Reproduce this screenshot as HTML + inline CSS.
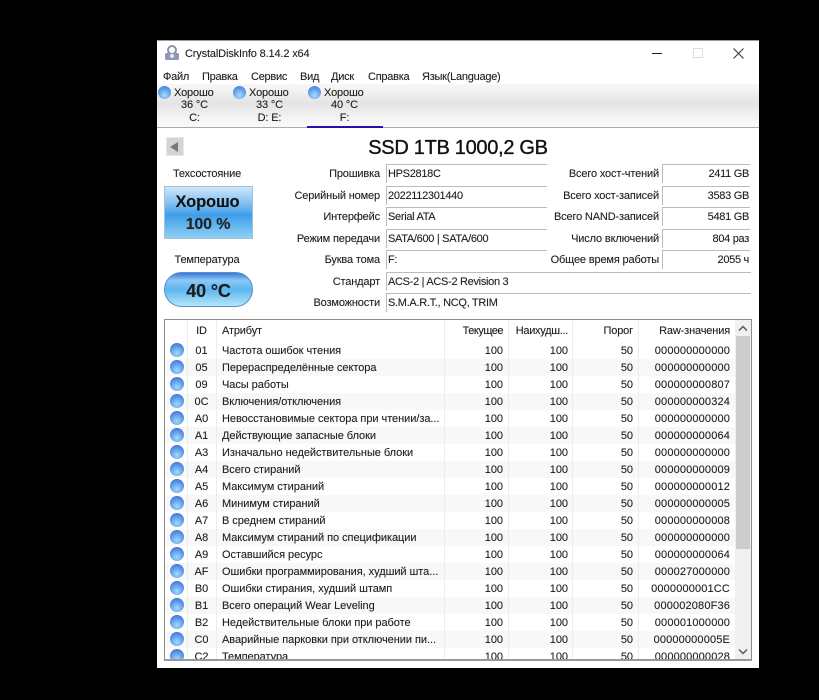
<!DOCTYPE html>
<html><head><meta charset="utf-8"><style>
html,body{margin:0;padding:0;background:#000;width:819px;height:700px;overflow:hidden}
body{position:relative;font-family:"Liberation Sans","DejaVu Sans",sans-serif;font-size:11px;color:#1c1c1c;letter-spacing:-.15px;text-shadow:0 0 .6px rgba(0,0,0,.35)}
div{position:absolute;white-space:nowrap;box-sizing:border-box}
#w{left:157px;top:40px;width:602px;height:628px;background:#fff;border-top:1px solid #9a9a9a}
.m{top:70px;height:14px;line-height:14px;letter-spacing:-.25px}
.t{width:75px;text-align:center;line-height:13px}
.l{right:439px;text-align:right;height:18px;line-height:18px}
.v{left:386px;height:19px;line-height:18px;padding-left:1px;border-top:1px solid #bbb;border-left:1px solid #bbb;width:161px;letter-spacing:-.3px}
.lr{right:160px;text-align:right;height:18px;line-height:18px}
.vr{left:662px;width:88px;height:19px;line-height:18px;padding-right:1px;text-align:right;border-top:1px solid #bbb;border-left:1px solid #bbb;letter-spacing:-.3px}
.h{top:324px;height:14px;line-height:14px}
.r{left:165px;width:570px;height:17px;line-height:17px;overflow:hidden;letter-spacing:-.05px}
.r.o{background:#f8f8f8}
.r b{position:absolute;font-weight:normal;top:1px}
.i{left:5px;top:1px;width:14px;height:14px;position:absolute;border-radius:50%;background:radial-gradient(circle at 50% 72%,#a4daf9 0,#5a98ea 55%,#3a5cc8 100%)}
.a{left:22px;width:29px;text-align:center}
.n{left:57px;width:226px;overflow:hidden}
.c{right:232px}.d{right:167px}.e{right:102px}.f{right:5px;letter-spacing:.15px}
.s{width:13px;height:13px;border-radius:50%;top:86px;background:radial-gradient(circle at 50% 72%,#a8dcfa 0,#5a9aea 60%,#4a76c8 100%)}
.cl{width:1px;background:#ececf2}
</style></head><body>
<div id="w"></div>
<svg style="position:absolute;left:163px;top:45px" width="18" height="17" viewBox="0 0 18 17"><ellipse cx="9" cy="5" rx="4" ry="4" fill="none" stroke="#8a93ad" stroke-width="2"/><rect x="2" y="8" width="14" height="7" rx="1.5" fill="#8f97b5"/><circle cx="9" cy="11" r="2" fill="#e4e8f2"/></svg>
<div style="left:185px;top:47px;height:14px;line-height:14px">CrystalDiskInfo 8.14.2 x64</div>
<div style="left:652px;top:53px;width:10px;height:1px;background:#222"></div>
<div style="left:693px;top:48px;width:10px;height:10px;border:1px solid #ddd"></div>
<svg style="position:absolute;left:733px;top:48px" width="11" height="11"><path d="M.5.5l10 10M10.5.5l-10 10" stroke="#333" fill="none"/></svg>
<div class="m" style="left:163px">Файл</div><div class="m" style="left:202px">Правка</div><div class="m" style="left:251px">Сервис</div><div class="m" style="left:300px">Вид</div><div class="m" style="left:331px">Диск</div><div class="m" style="left:368px">Справка</div><div class="m" style="left:422px">Язык(Language)</div>
<div style="left:157px;top:84px;width:602px;height:44px;background:linear-gradient(#f8f8f8 0,#f2f2f2 15%,#e4e4e4 45%,#f4f4f4 80%,#fafafa 100%);border-bottom:1px solid #aaa"></div>
<div class="s" style="left:158px"></div><div class="s" style="left:233px"></div><div class="s" style="left:308px"></div>
<div style="left:174px;top:87px;line-height:13px">Хорошо</div><div style="left:249px;top:87px;line-height:13px">Хорошо</div><div style="left:324px;top:87px;line-height:13px">Хорошо</div>
<div class="t" style="left:157px;top:99px">36 °C</div><div class="t" style="left:232px;top:99px">33 °C</div><div class="t" style="left:307px;top:99px">40 °C</div>
<div class="t" style="left:157px;top:112px">C:</div><div class="t" style="left:232px;top:112px">D: E:</div><div class="t" style="left:307px;top:112px">F:</div>
<div style="left:307px;top:126px;width:76px;height:2px;background:#2a10a8"></div>
<div style="left:166px;top:137px;width:18px;height:19px;background:#d4d4d4;border:1px solid #e8e8e8"></div>
<div style="left:170px;top:142px;width:0;height:0;border:5px solid transparent;border-left:0;border-right:8px solid #777"></div>
<div style="left:157px;top:134px;width:602px;text-align:center;font-size:20px;line-height:28px;color:#111;letter-spacing:-.3px;-webkit-text-stroke:.3px #111">SSD 1TB 1000,2 GB</div>
<div style="left:164px;top:167px;width:86px;text-align:center;height:14px;line-height:14px">Техсостояние</div>
<div style="left:164px;top:186px;width:89px;height:53px;border:1px solid #9fc3d8;background:linear-gradient(#cfe6fa 0,#7cbcf0 35%,#3f9ee8 55%,#8fd0f6 100%)"></div>
<div style="left:164px;top:192px;width:87px;text-align:center;font-weight:bold;font-size:16.5px;line-height:20px;color:#111">Хорошо</div>
<div style="left:164px;top:215px;width:88px;text-align:center;font-weight:bold;font-size:16px;line-height:20px;color:#222">100 %</div>
<div style="left:164px;top:253px;width:86px;text-align:center;height:14px;line-height:14px">Температура</div>
<div style="left:164px;top:272px;width:89px;height:35px;border-radius:18px;border:1px solid #5a8ec8;background:linear-gradient(#3a78d8 0,#8cc8f4 22%,#5cb6f0 50%,#b4e6fa 100%)"></div>
<div style="left:164px;top:280px;width:89px;text-align:center;font-weight:bold;font-size:18px;line-height:22px;color:#1a1a1a">40 °C</div>
<div class="l" style="top:165px">Прошивка</div><div class="v" style="top:164px;">HPS2818C</div>
<div class="l" style="top:187px">Серийный номер</div><div class="v" style="top:186px;">2022112301440</div>
<div class="l" style="top:208px">Интерфейс</div><div class="v" style="top:207px;">Serial ATA</div>
<div class="l" style="top:230px">Режим передачи</div><div class="v" style="top:229px;">SATA/600 | SATA/600</div>
<div class="l" style="top:251px">Буква тома</div><div class="v" style="top:250px;">F:</div>
<div class="l" style="top:273px">Стандарт</div><div class="v" style="top:272px;width:365px">ACS-2 | ACS-2 Revision 3</div>
<div class="l" style="top:294px">Возможности</div><div class="v" style="top:293px;width:365px">S.M.A.R.T., NCQ, TRIM</div>
<div class="lr" style="top:165px">Всего хост-чтений</div><div class="vr" style="top:164px">2411 GB</div>
<div class="lr" style="top:187px">Всего хост-записей</div><div class="vr" style="top:186px">3583 GB</div>
<div class="lr" style="top:208px">Всего NAND-записей</div><div class="vr" style="top:207px">5481 GB</div>
<div class="lr" style="top:230px">Число включений</div><div class="vr" style="top:229px">804 раз</div>
<div class="lr" style="top:251px">Общее время работы</div><div class="vr" style="top:250px">2055 ч</div>
<div style="left:164px;top:319px;width:588px;height:342px;border:1px solid #8c8c8c;border-bottom:2px solid #999;overflow:hidden"></div>
<div class="h" style="left:187px;width:29px;text-align:center">ID</div><div class="h" style="left:222px">Атрибут</div><div class="h" style="right:316px;letter-spacing:-.5px">Текущее</div><div class="h" style="right:251px;letter-spacing:-.3px">Наихудш...</div><div class="h" style="right:186px">Порог</div><div class="h" style="right:89px">Raw-значения</div>
<div class="r" style="top:342px"><i class="i"></i><b class="a">01</b><b class="n">Частота ошибок чтения</b><b class="c">100</b><b class="d">100</b><b class="e">50</b><b class="f">000000000000</b></div>
<div class="r o" style="top:359px"><i class="i"></i><b class="a">05</b><b class="n">Перераспределённые сектора</b><b class="c">100</b><b class="d">100</b><b class="e">50</b><b class="f">000000000000</b></div>
<div class="r" style="top:376px"><i class="i"></i><b class="a">09</b><b class="n">Часы работы</b><b class="c">100</b><b class="d">100</b><b class="e">50</b><b class="f">000000000807</b></div>
<div class="r o" style="top:393px"><i class="i"></i><b class="a">0C</b><b class="n">Включения/отключения</b><b class="c">100</b><b class="d">100</b><b class="e">50</b><b class="f">000000000324</b></div>
<div class="r" style="top:410px"><i class="i"></i><b class="a">A0</b><b class="n">Невосстановимые сектора при чтении/за...</b><b class="c">100</b><b class="d">100</b><b class="e">50</b><b class="f">000000000000</b></div>
<div class="r o" style="top:427px"><i class="i"></i><b class="a">A1</b><b class="n">Действующие запасные блоки</b><b class="c">100</b><b class="d">100</b><b class="e">50</b><b class="f">000000000064</b></div>
<div class="r" style="top:444px"><i class="i"></i><b class="a">A3</b><b class="n">Изначально недействительные блоки</b><b class="c">100</b><b class="d">100</b><b class="e">50</b><b class="f">000000000000</b></div>
<div class="r o" style="top:461px"><i class="i"></i><b class="a">A4</b><b class="n">Всего стираний</b><b class="c">100</b><b class="d">100</b><b class="e">50</b><b class="f">000000000009</b></div>
<div class="r" style="top:478px"><i class="i"></i><b class="a">A5</b><b class="n">Максимум стираний</b><b class="c">100</b><b class="d">100</b><b class="e">50</b><b class="f">000000000012</b></div>
<div class="r o" style="top:495px"><i class="i"></i><b class="a">A6</b><b class="n">Минимум стираний</b><b class="c">100</b><b class="d">100</b><b class="e">50</b><b class="f">000000000005</b></div>
<div class="r" style="top:512px"><i class="i"></i><b class="a">A7</b><b class="n">В среднем стираний</b><b class="c">100</b><b class="d">100</b><b class="e">50</b><b class="f">000000000008</b></div>
<div class="r o" style="top:529px"><i class="i"></i><b class="a">A8</b><b class="n">Максимум стираний по спецификации</b><b class="c">100</b><b class="d">100</b><b class="e">50</b><b class="f">000000000000</b></div>
<div class="r" style="top:546px"><i class="i"></i><b class="a">A9</b><b class="n">Оставшийся ресурс</b><b class="c">100</b><b class="d">100</b><b class="e">50</b><b class="f">000000000064</b></div>
<div class="r o" style="top:563px"><i class="i"></i><b class="a">AF</b><b class="n">Ошибки программирования, худший шта...</b><b class="c">100</b><b class="d">100</b><b class="e">50</b><b class="f">000027000000</b></div>
<div class="r" style="top:580px"><i class="i"></i><b class="a">B0</b><b class="n">Ошибки стирания, худший штамп</b><b class="c">100</b><b class="d">100</b><b class="e">50</b><b class="f">0000000001CC</b></div>
<div class="r o" style="top:597px"><i class="i"></i><b class="a">B1</b><b class="n">Всего операций Wear Leveling</b><b class="c">100</b><b class="d">100</b><b class="e">50</b><b class="f">000002080F36</b></div>
<div class="r" style="top:614px"><i class="i"></i><b class="a">B2</b><b class="n">Недействительные блоки при работе</b><b class="c">100</b><b class="d">100</b><b class="e">50</b><b class="f">000001000000</b></div>
<div class="r o" style="top:631px"><i class="i"></i><b class="a">C0</b><b class="n">Аварийные парковки при отключении пи...</b><b class="c">100</b><b class="d">100</b><b class="e">50</b><b class="f">00000000005E</b></div>
<div class="r" style="top:648px;height:11px"><i class="i"></i><b class="a">C2</b><b class="n">Температура</b><b class="c">100</b><b class="d">100</b><b class="e">50</b><b class="f">000000000028</b></div>
<div class="cl" style="left:187px;top:320px;height:339px"></div><div class="cl" style="left:216px;top:320px;height:339px"></div><div class="cl" style="left:444px;top:320px;height:339px"></div><div class="cl" style="left:508px;top:320px;height:339px"></div><div class="cl" style="left:572px;top:320px;height:339px"></div><div class="cl" style="left:638px;top:320px;height:339px"></div>
<div style="left:735px;top:320px;width:16px;height:339px;background:#f0f0f0"></div>
<div style="left:736px;top:336px;width:14px;height:213px;background:#cdcdcd"></div>
<svg style="position:absolute;left:738px;top:325px" width="10" height="7"><path d="M1 5.5l4-4 4 4" stroke="#555" stroke-width="1.4" fill="none"/></svg>
<svg style="position:absolute;left:738px;top:648px" width="10" height="7"><path d="M1 1.5l4 4 4-4" stroke="#555" stroke-width="1.4" fill="none"/></svg>
</body></html>
